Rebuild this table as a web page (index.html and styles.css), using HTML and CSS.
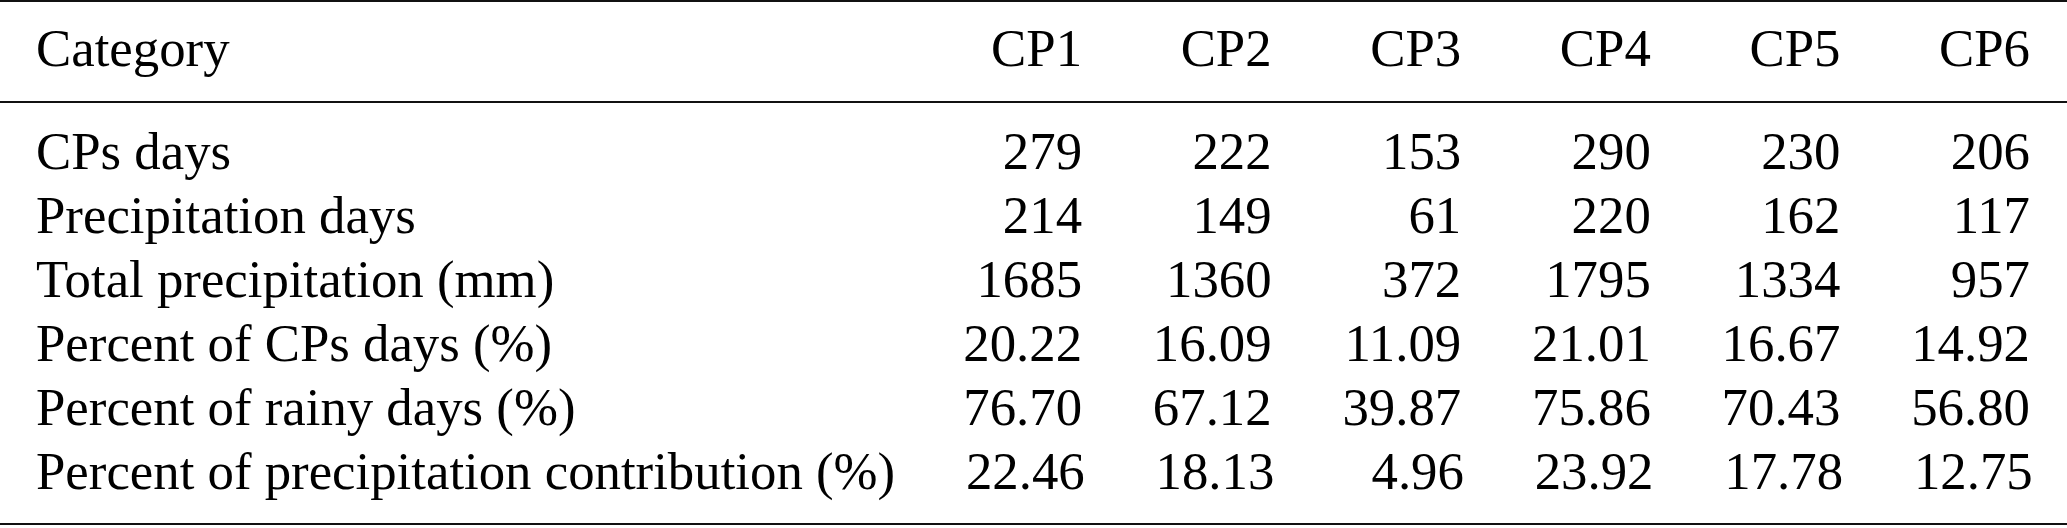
FILE: index.html
```html
<!DOCTYPE html>
<html lang="en">
<head>
    <meta charset="UTF-8">
    <meta name="viewport" content="width=device-width, initial-scale=1.0">
    <title>Circulation patterns - precipitation statistics</title>
    <link rel="stylesheet" href="styles.css">
</head>
<body>
    <div class="cp-table">
        <div class="row head">
            <div class="label">Category</div>
            <div class="num">CP1</div>
            <div class="num">CP2</div>
            <div class="num">CP3</div>
            <div class="num">CP4</div>
            <div class="num">CP5</div>
            <div class="num">CP6</div>
        </div>

        <div class="body">
            <div class="row">
                <div class="label">CPs days</div>
                <div class="num">279</div>
                <div class="num">222</div>
                <div class="num">153</div>
                <div class="num">290</div>
                <div class="num">230</div>
                <div class="num">206</div>
            </div>
            <div class="row">
                <div class="label">Precipitation days</div>
                <div class="num">214</div>
                <div class="num">149</div>
                <div class="num">61</div>
                <div class="num">220</div>
                <div class="num">162</div>
                <div class="num">117</div>
            </div>
            <div class="row">
                <div class="label">Total precipitation (mm)</div>
                <div class="num">1685</div>
                <div class="num">1360</div>
                <div class="num">372</div>
                <div class="num">1795</div>
                <div class="num">1334</div>
                <div class="num">957</div>
            </div>
            <div class="row">
                <div class="label">Percent of CPs days (%)</div>
                <div class="num">20.22</div>
                <div class="num">16.09</div>
                <div class="num">11.09</div>
                <div class="num">21.01</div>
                <div class="num">16.67</div>
                <div class="num">14.92</div>
            </div>
            <div class="row">
                <div class="label">Percent of rainy days (%)</div>
                <div class="num">76.70</div>
                <div class="num">67.12</div>
                <div class="num">39.87</div>
                <div class="num">75.86</div>
                <div class="num">70.43</div>
                <div class="num">56.80</div>
            </div>
            <div class="row">
                <div class="label">Percent of precipitation contribution (%)</div>
                <div class="num">22.46</div>
                <div class="num">18.13</div>
                <div class="num">4.96</div>
                <div class="num">23.92</div>
                <div class="num">17.78</div>
                <div class="num">12.75</div>
            </div>
        </div>
    </div>
</body>
</html>
```

FILE: styles.css
```css
body {
    margin: 0;
    background: #ffffff;
    color: #000000;
    font-family: "Liberation Serif", "Times New Roman", serif;
}

.cp-table {
    width: 100%;
    font-size: 52.8px;
    line-height: 64px;
    border-top: 2px solid #111;
    border-bottom: 2px solid #111;
}

.row {
    display: grid;
    grid-template-columns: 1fr repeat(6, 189.6px);
}

.head {
    padding: 14px 37px 21px 36px;
    border-bottom: 2px solid #111;
}

.body {
    padding: 16px 37px 20px 36px;
}

.label {
    text-align: left;
    white-space: nowrap;
}

.num {
    text-align: right;
    white-space: nowrap;
}
```
